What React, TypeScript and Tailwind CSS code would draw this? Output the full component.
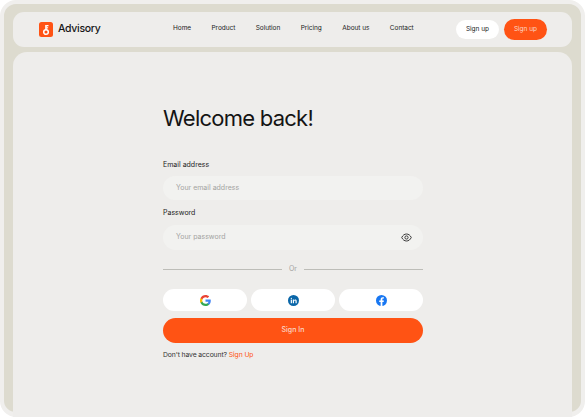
import React from "react";

const font = { fontFamily: "Inter, sans-serif" };

function Google() {
  return (
    <svg width="11" height="11" viewBox="0 0 24 24">
      <path fill="#4285F4" d="M23.5 12.3c0-.8-.1-1.600-.2-2.300H12v4.500h6.500c-.3 1.500-1.100 2.800-2.400 3.600v3h3.900c2.300-2.100 3.500-5.200 3.500-8.800z" />
      <path fill="#34A853" d="M12 24c3.200 0 6-1.100 8-2.900l-3.900-3c-1.100.7-2.500 1.200-4.100 1.200-3.100 0-5.800-2.100-6.700-5H1.300v3.100C3.300 21.300 7.300 24 12 24z" />
      <path fill="#FBBC05" d="M5.300 14.300c-.5-1.500-.5-3.100 0-4.600V6.600h-4a12 12 0 0 0 0 10.800l4-3.100z" />
      <path fill="#EA4335" d="M12 4.800c1.800 0 3.300.6 4.600 1.800l3.400-3.400C17.900 1.200 15.200 0 12 0 7.300 0 3.300 2.700 1.300 6.600l4 3.100c.9-2.800 3.600-4.900 6.700-4.900z" />
    </svg>
  );
}

function Linkedin() {
  return (
    <svg width="11" height="11" viewBox="0 0 24 24">
      <circle cx="12" cy="12" r="12" fill="#0A66A8" />
      <rect x="6" y="10" width="2.600" height="8" fill="#fff" />
      <circle cx="7.300" cy="7.300" r="1.500" fill="#fff" />
      <path fill="#fff" d="M10.500 10h2.500v1.200c.5-.8 1.500-1.400 2.700-1.400 2.400 0 3.300 1.500 3.300 3.900V18h-2.600v-3.800c0-1.200-.3-2.100-1.500-2.100s-1.800.9-1.800 2.100V18h-2.600z" />
    </svg>
  );
}

function Facebook() {
  return (
    <svg width="11" height="11" viewBox="0 0 24 24">
      <circle cx="12" cy="12" r="12" fill="#1877F2" />
      <path fill="#fff" d="M16.700 15.500l.5-3.500h-3.300V9.800c0-1 .5-1.900 1.900-1.900h1.500V5c0 0-1.400-.2-2.700-.2-2.700 0-4.500 1.700-4.500 4.600V12H7v3.500h3.100V24h3.800v-8.500z" />
    </svg>
  );
}

function Eye() {
  return (
    <svg width="11" height="9" viewBox="0 0 22 18" fill="none" stroke="#2a2a2a" strokeWidth="1.800">
      <path d="M1.500 9C3.500 4.500 7 2 11 2s7.500 2.500 9.500 7c-2 4.500-5.500 7-9.500 7S3.500 13.500 1.500 9z" />
      <circle cx="11" cy="9" r="3.200" />
    </svg>
  );
}

function Logo() {
  return (
    <svg width="14" height="15" viewBox="0 0 14 15">
      <rect width="14" height="15" rx="2.500" fill="#FF5314" />
      <circle cx="7" cy="10" r="2.300" fill="none" stroke="#fff" strokeWidth="1.500" />
      <rect x="6.200" y="3" width="1.600" height="5" fill="#fff" />
      <rect x="7.500" y="3" width="2" height="1.300" fill="#fff" />
      <rect x="7.500" y="5.200" width="1.600" height="1.200" fill="#fff" />
    </svg>
  );
}

const navItems = ["Home", "Product", "Solution", "Pricing", "About us", "Contact"];

export default function App() {
  return (
    <div style={font} className="h-[417px] w-[585px] overflow-hidden bg-white">
      <div className="h-[417px] rounded-[16px] border-[4px] border-b-[5px] border-[#f0efed] bg-[#dddbcf] px-[9px] pt-[8px]">
        <header className="flex h-[35px] items-center rounded-[11px] bg-[#eeedeb] pl-[26px] pr-[25px]">
          <div className="flex w-[134px] items-center gap-[5px]">
            <Logo />
            <span className="text-[10.500px] font-medium leading-none tracking-[-0.3px] text-[#161616]">Advisory</span>
          </div>
          <nav className="flex items-center gap-[20.500px] pb-px text-[6.500px] font-normal tracking-[-0.05px] text-[#222]">
            {navItems.map((n) => (
              <span key={n}>{n}</span>
            ))}
          </nav>
          <div className="ml-auto flex items-center gap-[5px]">
            <span className="flex h-[19px] w-[43px] items-center justify-center rounded-full bg-white text-[6.500px] text-[#222]">Sign up</span>
            <span className="flex h-[21px] w-[43px] items-center justify-center rounded-full bg-[#ff5314] text-[6.500px] text-[#fbd8c8]">Sign up</span>
          </div>
        </header>
        <main className="mt-[5px] h-[366px] rounded-t-[14px] bg-[#eeedeb] pl-[150px] pt-[53px]">
          <div className="w-[260px]">
            <h1 className="text-[22px] font-normal leading-[26px] tracking-[-0.75px] text-[#141414]">Welcome back!</h1>
            <label className="mt-[28px] block text-[7px] font-normal leading-[12px] text-[#222]">Email address</label>
            <div className="mt-[5px] flex h-[24px] items-center rounded-full bg-[#f2f2f0] px-[13px] text-[7px] text-[#a3a3a1]">Your email address</div>
            <label className="mt-[7px] block text-[7px] font-normal leading-[12px] text-[#222]">Password</label>
            <div className="mt-[6px] flex h-[25px] items-center justify-between rounded-full bg-[#f2f2f0] pl-[13px] pr-[11px] text-[7px] text-[#a3a3a1]">
              Your password
              <Eye />
            </div>
            <div className="mt-[13px] flex h-[12px] items-center text-[7px] text-[#a3a3a1]">
              <div className="h-px w-[119px] bg-[#bdbdb8]" />
              <span className="flex-1 text-center">Or</span>
              <div className="h-px w-[119px] bg-[#bdbdb8]" />
            </div>
            <div className="mt-[14px] grid grid-cols-3 gap-[4px]">
              <div className="flex h-[22px] items-center justify-center rounded-full bg-white"><Google /></div>
              <div className="flex h-[22px] items-center justify-center rounded-full bg-white"><Linkedin /></div>
              <div className="flex h-[22px] items-center justify-center rounded-full bg-white"><Facebook /></div>
            </div>
            <button className="mt-[7px] flex h-[25px] w-full items-center justify-center rounded-full bg-[#ff5314] text-[7px] font-medium text-[#fbd8c8]">Sign In</button>
            <p className="mt-[7px] text-[6.800px] leading-[10px] tracking-[-0.1px] text-[#333]">
              Don't have account? <span className="text-[#ff5314]">Sign Up</span>
            </p>
          </div>
        </main>
      </div>
    </div>
  );
}
